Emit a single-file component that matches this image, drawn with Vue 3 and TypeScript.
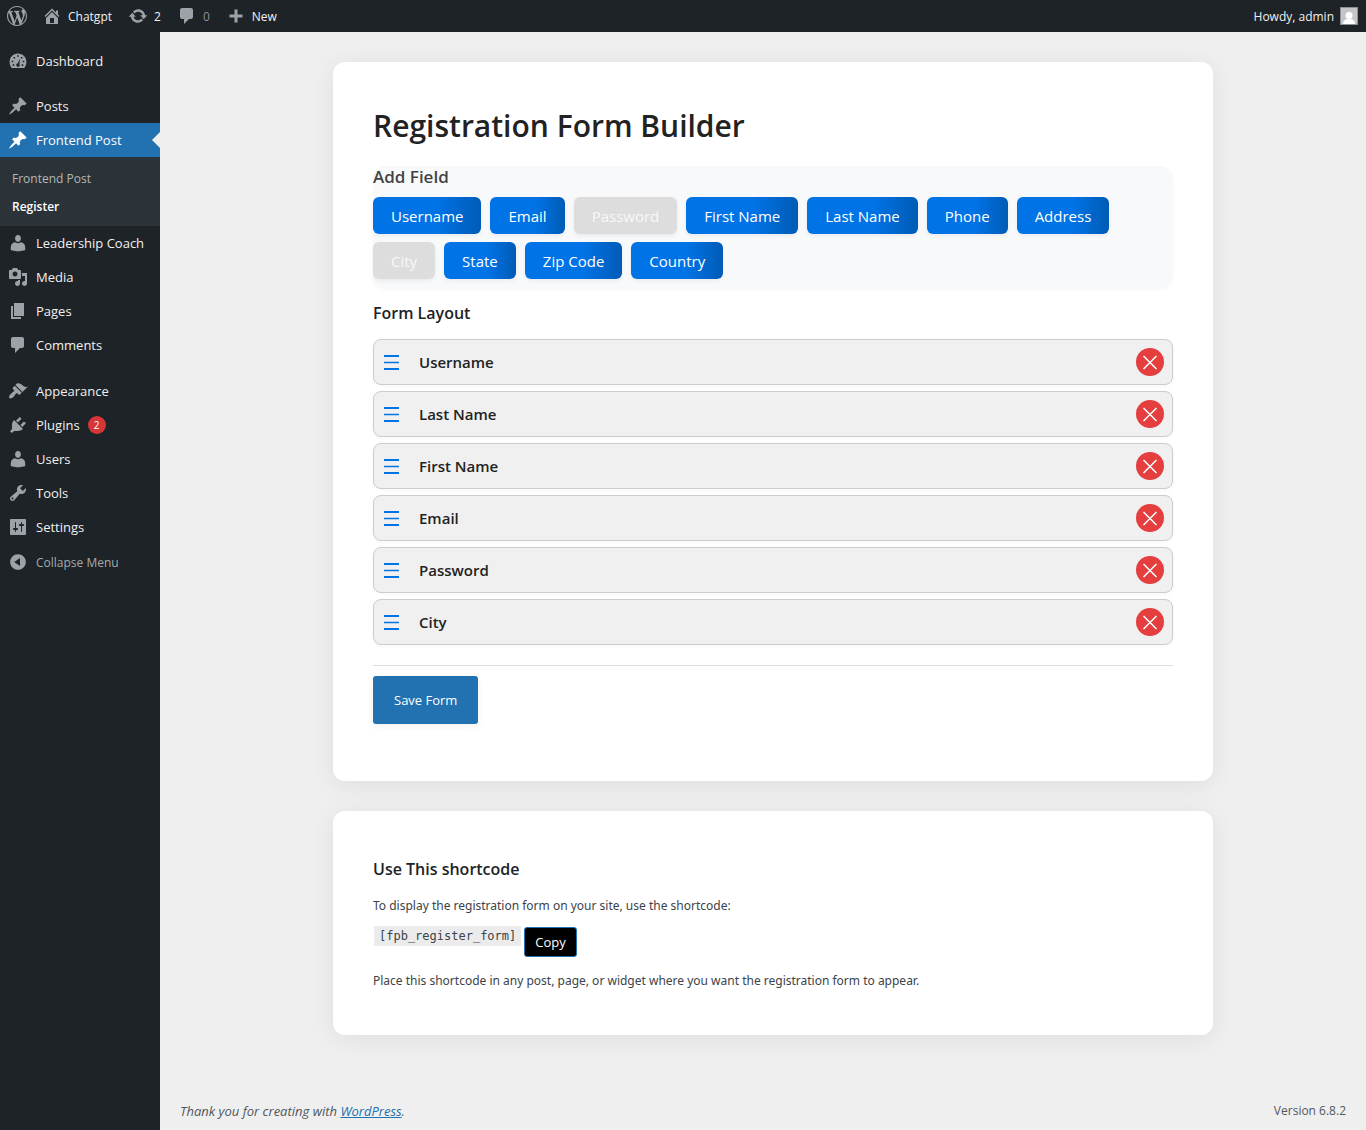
<script setup lang="ts">
import { ref } from 'vue'

interface MenuItem {
  label: string
  icon: string
  gapBefore?: boolean
  current?: boolean
  badge?: number
}

interface FieldOption {
  label: string
  disabled: boolean
}

const icons: Record<string, string> = {
  wordpress: 'M20 10c0-5.51-4.49-10-10-10C4.48 0 0 4.49 0 10c0 5.52 4.48 10 10 10 5.51 0 10-4.48 10-10zM7.78 15.37L4.37 6.22c.55-.02 1.17-.08 1.17-.08.5-.06.44-1.13-.06-1.11 0 0-1.45.11-2.37.11-.18 0-.37 0-.58-.01C4.12 2.69 6.87 1.11 10 1.11c2.33 0 4.45.87 6.05 2.34-.68-.11-1.65.39-1.65 1.58 0 .74.45 1.36.9 2.1.35.61.55 1.36.55 2.46 0 1.49-1.4 5-1.4 5l-3.03-8.37c.54-.02.82-.17.82-.17.5-.05.44-1.25-.06-1.22 0 0-1.44.12-2.38.12-.87 0-2.33-.12-2.33-.12-.5-.03-.56 1.2-.06 1.22l.92.08 1.26 3.41zM17.41 10c.24-.64.74-1.87.43-4.25.7 1.29 1.05 2.71 1.05 4.25 0 3.29-1.73 6.24-4.4 7.78.97-2.59 1.94-5.2 2.92-7.78zM6.1 18.09C3.12 16.65 1.11 13.53 1.11 10c0-1.3.23-2.48.72-3.59C3.25 10.3 4.67 14.2 6.1 18.09zm4.03-6.63l2.58 6.98c-.86.29-1.76.45-2.71.45-.79 0-1.57-.11-2.29-.33.81-2.38 1.62-4.74 2.42-7.1z',
  home: 'M16 8.5l1.53 1.53-1.06 1.06L10 4.6l-6.47 6.49-1.06-1.06L10 2.5l4 4v-2h2v4zm-6-2.46l6 5.99V18H4v-5.97zM12 17v-5H8v5h4z',
  update: 'M10.2 3.28c3.53 0 6.43 2.61 6.92 6h2.08l-3.5 4-3.5-4h2.32c-.45-1.97-2.21-3.45-4.32-3.45-1.45 0-2.73.71-3.54 1.78L4.95 5.66C6.23 4.2 8.11 3.28 10.2 3.28zm-.4 13.44c-3.52 0-6.43-2.61-6.92-6H.8l3.5-4c1.17 1.33 2.33 2.67 3.5 4H5.48c.45 1.97 2.21 3.45 4.32 3.45 1.45 0 2.73-.71 3.54-1.78l1.71 1.95c-1.28 1.46-3.15 2.38-5.25 2.38z',
  comment: 'M5 2h9c1.1 0 2 .9 2 2v7c0 1.1-.9 2-2 2h-2l-5 5v-5H5c-1.1 0-2-.9-2-2V4c0-1.1.9-2 2-2z',
  plus: 'M16.500 8.5v3h-5v5h-3v-5h-5v-3h5v-5h3v5h5z',
  dashboard: 'M3.8 17h12.4c1.4-1.6 2.2-3.600 2.200-6C18.400 6 14.600 2.500 10 2.500S1.600 6 1.600 11c0 2.400.8 4.400 2.200 6zM9.200 4.200h1.600v1.600H9.200zM5.500 5.900h1.600v1.600H5.500zM12.900 5.900h1.600v1.600h-1.600zM3.700 9.700h1.600v1.600H3.700zM14.700 9.700h1.600v1.600h-1.600zM12 7.600l-.6 5.600c.4.500.5 1.200.2 1.700-.5.900-1.600 1.200-2.500.7s-1.100-1.600-.6-2.500c.3-.5.7-.8 1.300-.9zM4.700 13.300h1.600v1.600H4.700zM13.700 13.300h1.600v1.600h-1.600z',
  pin: 'M10.44 3.02l1.82-1.82 6.36 6.35-1.83 1.82c-1.05-.68-2.48-.57-3.41.36l-.75.75c-.92.93-1.04 2.35-.35 3.41l-1.83 1.82-2.41-2.41-2.8 2.79c-.42.42-3.38 2.71-3.8 2.29s1.86-3.39 2.28-3.81l2.79-2.79L4.1 9.36l1.83-1.82c1.05.69 2.48.57 3.4-.36l.75-.75c.93-.92 1.05-2.35.36-3.41z',
  user: 'M10 8.900c-1.900 0-2.900-1.600-2.900-3.600C7.100 3.300 8.200 2 10 2s2.900 1.300 2.900 3.300c0 2-1 3.600-2.900 3.600zM7.300 9.300c.8.6 1.700.9 2.700.9s1.900-.3 2.700-.9c2.700.3 4.500 2.200 4.500 4.600v3.100s-3 1.200-7.200 1.200-7.200-1.200-7.200-1.200v-3.100c0-2.400 1.800-4.300 4.500-4.600z',
  media: 'M13 11V4c0-.55-.45-1-1-1h-1.67L9 1H5L3.67 3H2c-.55 0-1 .45-1 1v7c0 .55.45 1 1 1h10c.55 0 1-.45 1-1zM7 4.5c1.38 0 2.5 1.12 2.5 2.5S8.38 9.5 7 9.5 4.5 8.38 4.5 7 5.62 4.5 7 4.5zM14 6h5v10.5c0 1.38-1.12 2.5-2.5 2.5S14 17.88 14 16.5s1.12-2.5 2.5-2.5c.17 0 .34.02.5.05V9h-3V6zm-4 8.05V13h2v3.5c0 1.38-1.12 2.5-2.5 2.5S7 17.88 7 16.5 8.12 14 9.5 14c.17 0 .34.02.5.05z',
  page: 'M6 15V2h10v13H6zm-1 1h8v2H3V5h2v11z',
  brush: 'M14.48 11.06L7.41 3.99l1.5-1.5c.5-.56 2.3-.47 3.51.32 1.21.8 1.43 1.28 2.91 2.1 1.18.64 2.45 1.26 4.45.85zm-.71.71L6.7 4.7 4.93 6.47c-.39.39-.39 1.02 0 1.41l1.06 1.06c.39.39.39 1.03 0 1.42-.6.6-1.43 1.11-2.21 1.69-.35.26-.7.53-1.01.84C1.43 14.23.4 16.08 1.4 17.07c.99 1 2.84-.03 4.18-1.36.31-.31.58-.66.85-1.02.57-.78 1.08-1.61 1.69-2.21.39-.39 1.02-.39 1.41 0l1.06 1.06c.39.39 1.02.39 1.41 0z',
  plugin: 'M13.11 4.36L9.87 7.6 8 5.73l3.24-3.24c.35-.34 1.05-.2 1.56.32.52.51.66 1.21.31 1.55zm-8 1.77l.91-1.12 9.01 9.01-1.19.84c-.71.71-2.63 1.16-3.82 1.16H6.14L4.9 17.26c-.59.59-1.54.59-2.12 0-.59-.58-.59-1.53 0-2.12l1.24-1.24v-3.88c0-1.13.4-3.19 1.09-3.89zm7.26 3.97l3.24-3.24c.34-.35 1.04-.21 1.55.31.52.51.66 1.21.31 1.55l-3.24 3.25z',
  wrench: 'M16.68 9.77c-1.34 1.34-3.3 1.67-4.95.99l-5.41 6.52c-.99.99-2.59.99-3.58 0s-.99-2.59 0-3.57l6.52-5.42c-.68-1.65-.35-3.61.99-4.95 1.28-1.28 3.12-1.62 4.72-1.06l-2.89 2.89 2.82 2.82 2.86-2.87c.53 1.58.18 3.39-1.08 4.65zM3.81 16.21c.4.39 1.04.39 1.43 0 .4-.4.4-1.04 0-1.43-.39-.4-1.03-.4-1.43 0-.39.39-.39 1.03 0 1.43z',
  settings: 'M18 17V3c0-.55-.45-1-1-1H3c-.55 0-1 .45-1 1v14c0 .55.45 1 1 1h14c.55 0 1-.45 1-1zM8 11h1c.55 0 1 .45 1 1s-.45 1-1 1H8v1.500c0 .28-.22.5-.5.5s-.5-.22-.5-.5V13H6c-.55 0-1-.45-1-1s.45-1 1-1h1V5.500c0-.28.22-.5.5-.5s.5.22.5.5V11zm5-2h-1c-.55 0-1-.45-1-1s.45-1 1-1h1V5.500c0-.28.22-.5.5-.5s.5.22.5.5V7h1c.55 0 1 .45 1 1s-.45 1-1 1h-1v5.500c0 .28-.22.5-.5.5s-.5-.22-.5-.5V9z',
  collapse: 'M10 2.16c4.33 0 7.84 3.51 7.84 7.84S14.33 17.84 10 17.84 2.16 14.33 2.16 10 5.71 2.16 10 2.16zm2 11.72V6.12L6.18 9.97z',
}

const topMenu: MenuItem[] = [
  { label: 'Dashboard', icon: 'dashboard' },
  { label: 'Posts', icon: 'pin', gapBefore: true },
  { label: 'Frontend Post', icon: 'pin', current: true },
]

const lowerMenu: MenuItem[] = [
  { label: 'Leadership Coach', icon: 'user' },
  { label: 'Media', icon: 'media' },
  { label: 'Pages', icon: 'page' },
  { label: 'Comments', icon: 'comment' },
  { label: 'Appearance', icon: 'brush', gapBefore: true },
  { label: 'Plugins', icon: 'plugin', badge: 2 },
  { label: 'Users', icon: 'user' },
  { label: 'Tools', icon: 'wrench' },
  { label: 'Settings', icon: 'settings' },
]

const options = ref<FieldOption[]>([
  { label: 'Username', disabled: false },
  { label: 'Email', disabled: false },
  { label: 'Password', disabled: true },
  { label: 'First Name', disabled: false },
  { label: 'Last Name', disabled: false },
  { label: 'Phone', disabled: false },
  { label: 'Address', disabled: false },
  { label: 'City', disabled: true },
  { label: 'State', disabled: false },
  { label: 'Zip Code', disabled: false },
  { label: 'Country', disabled: false },
])

const layout = ref<string[]>(['Username', 'Last Name', 'First Name', 'Email', 'Password', 'City'])
const shortcode = '[fpb_register_form]'

function addField(option: FieldOption): void {
  if (!layout.value.includes(option.label)) layout.value.push(option.label)
  option.disabled = true
}

function removeField(label: string): void {
  layout.value = layout.value.filter((name) => name !== label)
  const option = options.value.find((o) => o.label === label)
  if (option) option.disabled = false
}

function copyShortcode(): void {
  navigator.clipboard?.writeText(shortcode)
}
</script>

<template>
  <div class="admin">
    <header class="bar">
      <nav class="bar-left" aria-label="Toolbar">
        <a href="#" class="bar-item bar-logo" aria-label="About WordPress">
          <svg class="icon" viewBox="0 0 20 20"><path :d="icons.wordpress" /></svg>
        </a>
        <a href="#" class="bar-item">
          <svg class="icon" viewBox="0 0 20 20"><path :d="icons.home" /></svg><span>Chatgpt</span>
        </a>
        <a href="#" class="bar-item">
          <svg class="icon" viewBox="0 0 20 20"><path :d="icons.update" /></svg><span>2</span>
        </a>
        <a href="#" class="bar-item bar-muted">
          <svg class="icon" viewBox="0 0 20 20"><path :d="icons.comment" /></svg><span>0</span>
        </a>
        <a href="#" class="bar-item">
          <svg class="icon" viewBox="0 0 20 20"><path :d="icons.plus" /></svg><span>New</span>
        </a>
      </nav>
      <a href="#" class="bar-item bar-account">
        <span>Howdy, admin</span>
        <svg class="avatar" viewBox="0 0 18 18">
          <rect width="18" height="18" fill="#8c8f94" />
          <rect x="1" y="1" width="16" height="16" fill="#c5c5c7" />
          <circle cx="9" cy="8.500" r="3.500" fill="#fff" />
          <path d="M3 17c0-3 2-4.500 4-5h4c2 .5 4 2 4 5z" fill="#fff" />
        </svg>
      </a>
    </header>

    <div class="body">
      <aside class="sidebar">
        <nav aria-label="Main menu">
          <a
            v-for="item in topMenu"
            :key="item.label"
            href="#"
            class="menu-item"
            :class="{ current: item.current, spaced: item.gapBefore }"
          >
            <svg class="icon" viewBox="0 0 20 20"><path fill-rule="evenodd" :d="icons[item.icon]" /></svg>
            {{ item.label }}
          </a>
          <div class="submenu">
            <a href="#">Frontend Post</a>
            <a href="#" class="active">Register</a>
          </div>
          <a
            v-for="item in lowerMenu"
            :key="item.label"
            href="#"
            class="menu-item"
            :class="{ spaced: item.gapBefore }"
          >
            <svg class="icon" viewBox="0 0 20 20"><path :d="icons[item.icon]" /></svg>
            {{ item.label }}
            <span v-if="item.badge" class="badge">{{ item.badge }}</span>
          </a>
          <button type="button" class="menu-item collapse">
            <svg class="icon" viewBox="0 0 20 20"><path fill-rule="evenodd" :d="icons.collapse" /></svg>
            Collapse Menu
          </button>
        </nav>
      </aside>

      <div class="content">
        <main class="cards">
          <section class="card builder">
            <h1>Registration Form Builder</h1>
            <div class="palette">
              <h2>Add Field</h2>
              <div class="chips">
                <button
                  v-for="option in options"
                  :key="option.label"
                  type="button"
                  class="chip"
                  :disabled="option.disabled"
                  @click="addField(option)"
                >{{ option.label }}</button>
              </div>
            </div>
            <h3>Form Layout</h3>
            <ul class="rows">
              <li v-for="name in layout" :key="name" class="row">
                <svg class="handle" viewBox="0 0 15 16">
                  <path d="M0 2h15M0 15h15" stroke="#0073e6" stroke-width="2" />
                  <path d="M0 8.500h15" stroke="#0073e6" stroke-width="1.500" />
                </svg>
                <span class="row-name">{{ name }}</span>
                <button type="button" class="remove" :aria-label="`Remove ${name}`" @click="removeField(name)">
                  <svg viewBox="0 0 28 28">
                    <path d="M7.500 8l13 13M20.500 8l-13 13" stroke="#fff" stroke-width="1.500" />
                  </svg>
                </button>
              </li>
            </ul>
            <div class="actions">
              <button type="button" class="save">Save Form</button>
            </div>
          </section>

          <section class="card shortcode">
            <h3>Use This shortcode</h3>
            <p>To display the registration form on your site, use the shortcode:</p>
            <div class="code-line">
              <code>{{ shortcode }}</code>
              <button type="button" class="copy" @click="copyShortcode">Copy</button>
            </div>
            <p>Place this shortcode in any post, page, or widget where you want the registration form to appear.</p>
          </section>
        </main>

        <footer class="footer">
          <em>Thank you for creating with <a href="#">WordPress</a>.</em>
          <span>Version 6.8.2</span>
        </footer>
      </div>
    </div>
  </div>
</template>

<style>
body {
  margin: 0;
  background: #efefef;
}
</style>

<style scoped>
.admin {
  display: flex;
  flex-direction: column;
  min-height: 100vh;
  font-family: "Open Sans", "Noto Sans", sans-serif;
  font-size: 12px;
  line-height: 20px;
  color: #3c434a;
}

.admin *,
.admin *::before,
.admin *::after {
  box-sizing: border-box;
}

button {
  font-family: inherit;
  cursor: pointer;
}

h1,
h2,
h3,
p,
ul {
  margin: 0;
  padding: 0;
}

p {
  font-family: "Noto Sans", "Open Sans", sans-serif;
}

.icon {
  flex: none;
  width: 20px;
  height: 20px;
  fill: #9ca2a7;
}

.bar {
  display: flex;
  justify-content: space-between;
  height: 32px;
  background: #1d2327;
}

.bar-left {
  display: flex;
}

.bar-item {
  display: flex;
  align-items: center;
  gap: 6px;
  padding: 0 8px;
  color: #f0f0f1;
  text-decoration: none;
}

.bar-item span {
  padding-top: 1px;
}

.bar-logo {
  padding: 0 7px;
}

.bar-muted {
  color: #8c9196;
}

.avatar {
  width: 18px;
  height: 18px;
}

.body {
  display: flex;
  flex: 1;
}

.sidebar {
  flex: none;
  width: 160px;
  padding-top: 12px;
  background: #1d2327;
}

.menu-item {
  position: relative;
  display: flex;
  align-items: center;
  gap: 8px;
  width: 100%;
  height: 34px;
  padding: 0 8px;
  font-size: 13px;
  color: #f0f0f1;
  text-decoration: none;
  white-space: nowrap;
}

.spaced {
  margin-top: 11px;
}

.submenu ~ .spaced {
  margin-top: 12px;
}

.current {
  color: #fff;
  background: #2271b1;
}

.current .icon {
  fill: #fff;
}

.current::after {
  position: absolute;
  top: 9px;
  right: 0;
  border: 8px solid transparent;
  border-left-width: 0;
  border-right-color: #efefef;
  content: "";
}

.submenu {
  display: flex;
  flex-direction: column;
  padding: 8px 12px 5px;
  background: #2c3338;
}

.submenu a {
  line-height: 28px;
  color: #b4b7ba;
  text-decoration: none;
}

.submenu .active {
  font-weight: 600;
  color: #fff;
}

.badge {
  width: 18px;
  border-radius: 9px;
  font-size: 10px;
  line-height: 18px;
  color: #fff;
  text-align: center;
  background: #d63638;
}

.collapse {
  margin-top: 1px;
  border: 0;
  font-size: 12px;
  color: #a7aaad;
  background: none;
}

.content {
  display: flex;
  flex: 1;
  flex-direction: column;
  min-width: 0;
  padding: 30px 0 9px 20px;
}

.cards {
  display: flex;
  flex: 1;
  flex-direction: column;
  gap: 30px;
}

.card {
  width: 100%;
  max-width: 880px;
  margin: 0 auto;
  padding: 40px;
  border-radius: 12px;
  background: #fff;
  box-shadow: 0 4px 24px rgba(0, 0, 0, 0.07);
}

.builder {
  padding-bottom: 57px;
}

h1 {
  font-size: 30px;
  font-weight: 600;
  line-height: 48px;
  color: #222;
}

h2 {
  font-size: 17px;
  font-weight: 600;
  line-height: 21px;
  color: #444;
}

h3 {
  font-size: 16px;
  font-weight: 600;
  line-height: 24px;
  color: #1d2327;
}

.palette {
  margin: 16px 0 12px;
  padding-bottom: 10px;
  border-radius: 12px;
  background: #f8f9fb;
  box-shadow: 0 2px 4px rgba(0, 0, 0, 0.02);
}

.chips {
  display: flex;
  flex-wrap: wrap;
  gap: 8px 9px;
  padding-top: 10px;
}

.chip {
  height: 37px;
  padding: 0 18px;
  border: 0;
  border-radius: 6px;
  font-size: 15px;
  color: #fff;
  background: linear-gradient(90deg, #0073e6 60%, #005bb5 100%);
  box-shadow: 0 2px 4px rgba(0, 0, 0, 0.06);
}

.chip:disabled {
  color: #f8f8f8;
  background: #ddd;
  cursor: default;
}

.rows {
  display: flex;
  flex-direction: column;
  gap: 6px;
  margin: 14px 0 20px;
  list-style: none;
}

.row {
  display: flex;
  align-items: center;
  height: 46px;
  padding: 0 8px 0 10px;
  border: 1px solid #ccc;
  border-radius: 8px;
  background: #f0f0f0;
  box-shadow: 0 1px 4px rgba(0, 0, 0, 0.04);
}

.handle {
  width: 15px;
  height: 16px;
}

.row-name {
  flex: 1;
  margin-left: 20px;
  font-size: 15px;
  font-weight: 600;
  color: #222;
}

.remove {
  width: 28px;
  height: 28px;
  padding: 0;
  border: 0;
  border-radius: 50%;
  background: #e53e3e;
}

.remove svg {
  display: block;
  fill: none;
}

.actions {
  padding-top: 10px;
  border-top: 1px solid #dcdcde;
}

.save {
  height: 48px;
  padding: 0 21px;
  border: 0;
  border-radius: 3px;
  font-size: 13px;
  color: #fff;
  background: #2271b1;
  box-shadow: 0 2px 8px rgba(0, 0, 0, 0.06);
}

.shortcode {
  padding: 46px 40px 44px;
}

.shortcode h3 {
  margin-bottom: 15px;
}

.code-line {
  display: flex;
  align-items: flex-start;
  gap: 3px;
  margin: 10px 0 14px 1px;
}

code {
  padding: 1px 5px 0;
  font-family: "DejaVu Sans Mono", monospace;
  font-size: 12px;
  line-height: 19px;
  background: #ebebeb;
}

.copy {
  height: 30px;
  margin-top: 1px;
  padding: 0 10px;
  border: 1px solid #2271b1;
  border-radius: 3px;
  font-size: 13px;
  color: #fff;
  background: #000;
}

.footer {
  display: flex;
  justify-content: space-between;
  padding-right: 20px;
  color: #50575e;
}

.footer em {
  font-size: 13px;
}

.footer a {
  color: #2271b1;
}
</style>
